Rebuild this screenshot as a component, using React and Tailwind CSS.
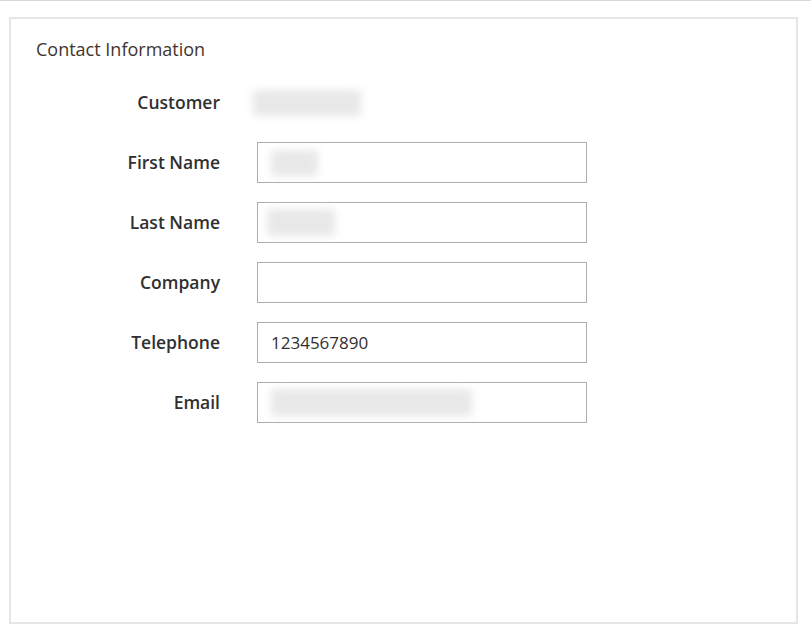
import React from "react";

const Blur = ({ w, h, className = "" }) => (
    <div className={`rounded-[3px] bg-[#e8e8e8] blur-[4px] ${className}`} style={{ width: w, height: h }} />
);

function Row({ label, children }) {
    return (
        <div className="flex h-[41px] items-center">
            <label className="w-[184px] shrink-0 text-right text-[17.5px] font-semibold text-[#303030]">{label}</label>
            <div className="ml-[37px]">{children}</div>
        </div>
    );
}

function Field({ children }) {
    return (
        <div className="flex h-[41px] w-[330px] items-center border border-[#adadad] bg-white px-[13px] text-[17px] text-[#303030]">
            {children}
        </div>
    );
}

export default function App() {
    return (
        <div className="min-h-screen bg-white font-['Open_Sans',sans-serif]">
            <div className="h-px w-full bg-[#d9d9d9]" />
            <div className="pt-[16px] pl-[9px] pr-[13px]">
                <div className="h-[607px] border-2 border-[#e6e6e6] bg-white pl-[25px] pt-[18px]">
                    <h2 className="text-[18px] leading-[24px] text-[#41362f]">Contact Information</h2>

                    <div className="mt-[21px] flex flex-col gap-[19px]">
                        <Row label="Customer">
                            <Blur w={108} h={26} className="-ml-[4px]" />
                        </Row>
                        <Row label="First Name">
                            <Field><Blur w={47} h={26} /></Field>
                        </Row>
                        <Row label="Last Name">
                            <Field><Blur w={68} h={27} className="-ml-[4px]" /></Field>
                        </Row>
                        <Row label="Company">
                            <Field />
                        </Row>
                        <Row label="Telephone">
                            <Field>1234567890</Field>
                        </Row>
                        <Row label="Email">
                            <Field><Blur w={201} h={27} /></Field>
                        </Row>
                    </div>
                </div>
            </div>
        </div>
    );
}
